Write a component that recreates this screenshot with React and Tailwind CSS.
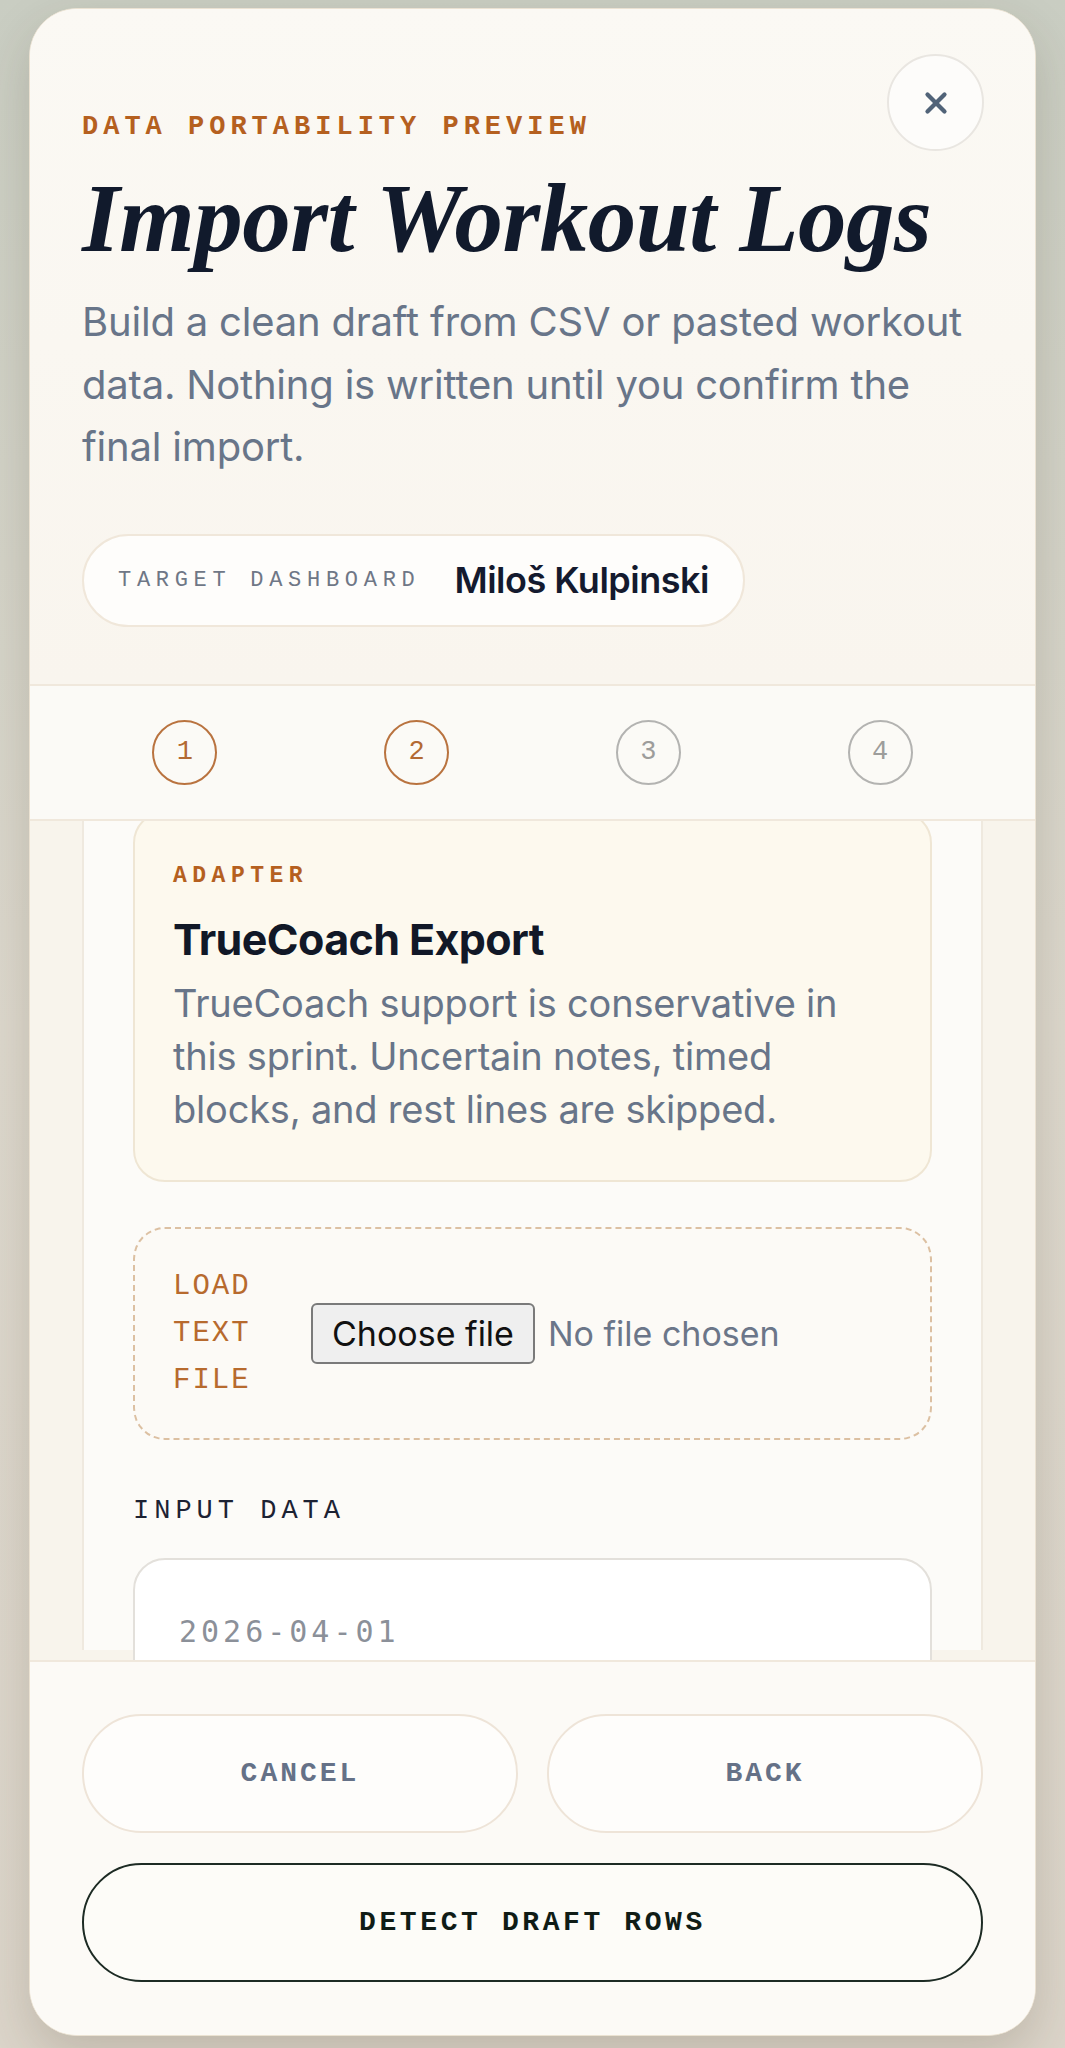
import { X } from 'lucide-react';

const mono = "font-['Liberation_Mono','DejaVu_Sans_Mono',monospace]";
const sans = "font-['Inter','Noto_Sans',sans-serif]";

const steps = [
  { n: 1, active: true },
  { n: 2, active: true },
  { n: 3, active: false },
  { n: 4, active: false },
];

const StepDot = ({ n, active }) => (
  <div className="flex justify-center">
    <div
      className={`flex h-[65px] w-[65px] items-center justify-center rounded-full border-2 ${mono} text-[27px] ${
        active ? 'border-[#b9733f] text-[#b36a33]' : 'border-[#b3b3b1] text-[#9d9d9b]'
      }`}
    >
      {n}
    </div>
  </div>
);

const App = () => {
  return (
    <div className="min-h-screen bg-gradient-to-b from-[#c9cdc2] via-[#ddd8cd] to-[#dcd5ca] pt-[8px]">
      <div className="mx-[29px] flex h-[2028px] flex-col overflow-hidden rounded-[48px] border border-[#ebe2d2] bg-[#faf8f3] shadow-[0_20px_50px_rgba(60,50,30,0.18)]">
        {/* header */}
        <div className="relative border-b-2 border-[#f0e8dc] bg-gradient-to-b from-[#fbf9f4] to-[#f9f5ee] px-[52px] pt-[102px] pb-[57px]">
          <button className="absolute right-[51px] top-[45px] flex h-[97px] w-[97px] items-center justify-center rounded-full border-2 border-[#e9e6e1] bg-[#fdfcfa]">
            <X size={34} strokeWidth={3} className="text-[#516378]" />
          </button>
          <div className={`${mono} text-[27px] font-bold leading-[32px] tracking-[5px] text-[#b5601f]`}>
            DATA PORTABILITY PREVIEW
          </div>
          <h1 className="mt-[27px] font-['Liberation_Serif','DejaVu_Serif',serif] text-[97px] font-bold italic leading-[97px] tracking-[-0.5px] text-[#111a2c]">
            Import Workout Logs
          </h1>
          <p className={`mt-[24px] ${sans} text-[40px] leading-[62.5px] tracking-[-0.2px] text-[#687589]`}>
            Build a clean draft from CSV or pasted workout data. Nothing is written until you confirm the final import.
          </p>
          <div className="mt-[55px] inline-flex h-[93px] items-center gap-[34px] rounded-full border-2 border-[#f0e7da] bg-[#fefdfb] px-[34px]">
            <span className={`${mono} text-[22px] tracking-[5.7px] text-[#6f7786]`}>TARGET DASHBOARD</span>
            <span className={`${sans} text-[36px] font-semibold tracking-[-0.5px] text-[#141a2e]`}>Miloš Kulpinski</span>
          </div>
        </div>

        {/* steps */}
        <div className="grid h-[135px] shrink-0 grid-cols-4 items-center border-b-2 border-[#f0e8dc] bg-[#fbfaf6] px-[39px]">
          {steps.map((s) => (
            <StepDot key={s.n} n={s.n} active={s.active} />
          ))}
        </div>

        {/* scroll area */}
        <div className="min-h-0 flex-1 overflow-hidden bg-[#f8f4ec]">
          <div className="mx-[52px] h-full border-x-2 border-[#efe9df] bg-[#fcfbf8] px-[49px]">
            <div className="-mt-[10px]">
              <div className="rounded-[32px] border-2 border-[#efe6d4] bg-[#fdf9ee] px-[38px] pt-[48px] pb-[44px]">
                <div className={`${mono} text-[23px] font-bold leading-[30px] tracking-[5.5px] text-[#b5601f]`}>ADAPTER</div>
                <div className={`mt-[22px] ${sans} text-[43px] font-bold leading-[52px] tracking-[-0.6px] text-[#111827]`}>
                  TrueCoach Export
                </div>
                <p className={`mt-[12px] max-w-[700px] ${sans} text-[38px] leading-[53px] tracking-[-0.2px] text-[#687589]`}>
                  TrueCoach support is conservative in this sprint. Uncertain notes, timed blocks, and rest lines are skipped.
                </p>
              </div>

              <div className="mt-[45px] flex h-[213px] items-center gap-[42px] rounded-[32px] border-2 border-dashed border-[#dcc0a2] bg-[#fcfaf6] px-[38px]">
                <div className={`${mono} w-[96px] text-[29px] leading-[47px] tracking-[2px] text-[#b76a2e]`}>
                  LOAD
                  <br />
                  TEXT
                  <br />
                  FILE
                </div>
                <label className={`flex items-center gap-[13px] ${sans} text-[34px]`}>
                  <span className="rounded-[6px] border-2 border-[#7a7a7a] bg-[#efefef] px-[19px] py-[3px] text-[#111]">
                    Choose file
                  </span>
                  <span className="text-[#6b7689]">No file chosen</span>
                </label>
              </div>

              <div className={`mt-[55px] ${mono} text-[27px] leading-[32px] tracking-[5px] text-[#1c2233]`}>INPUT DATA</div>
              <textarea
                placeholder="2026-04-01"
                className={`mt-[31px] block h-[320px] w-full resize-none rounded-[32px] border-2 border-[#e3e0db] bg-white px-[44px] pt-[50px] font-['DejaVu_Sans_Mono',monospace] text-[30px] leading-[44px] tracking-[4px] outline-none placeholder:text-[#8b9099]`}
              />
            </div>
          </div>
        </div>

        {/* footer */}
        <div className="shrink-0 border-t-2 border-[#f0e8dc] bg-[#fcfaf6] px-[52px] pt-[52px] pb-[53px]">
          <div className="grid grid-cols-2 gap-[29px]">
            <button className={`h-[119px] rounded-full border-2 border-[#eee4d8] bg-[#fefdfb] ${mono} text-[28px] font-bold tracking-[3px] text-[#657187]`}>
              CANCEL
            </button>
            <button className={`h-[119px] rounded-full border-2 border-[#eee4d8] bg-[#fefdfb] ${mono} text-[28px] font-bold tracking-[3px] text-[#657187]`}>
              BACK
            </button>
          </div>
          <button className={`mt-[30px] h-[119px] w-full rounded-full border-2 border-[#1d2b24] bg-[#fdfcf8] ${mono} text-[28px] font-bold tracking-[3.6px] text-[#101c16]`}>
            DETECT DRAFT ROWS
          </button>
        </div>
      </div>
    </div>
  );
};

export default App;
